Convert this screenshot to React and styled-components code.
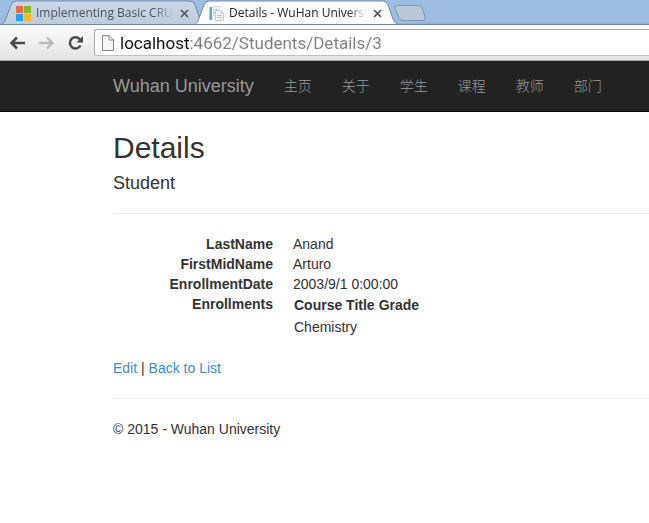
import React from "react";
import styled, { createGlobalStyle } from "styled-components";

const GlobalStyle = createGlobalStyle`
  *, *::before, *::after { box-sizing: border-box; }
  body {
    margin: 0;
    background: #fff;
    color: #333;
    font: 14px/20px "Liberation Sans", Arial, "Noto Sans CJK SC", sans-serif;
  }
  a { color: #428bca; text-decoration: none; }
  button { padding: 0; border: 0; background: none; }
`;

/* Browser frame */
const TabStrip = styled.div`
  display: flex;
  height: 25px;
  overflow: hidden;
  background: linear-gradient(#9dbde3 0 22px, #90b0d6);
  border-bottom: 1px solid #6e87a5;
`;

const Tab = styled.div`
  position: relative;
  flex: none;
  display: flex;
  align-items: center;
  width: 206px;
  height: 25px;
  padding: 1px 17px 0 15px;
  margin-left: ${(p) => (p.$active ? "-13px" : "0")};
  z-index: ${(p) => (p.$active ? 1 : 0)};
  color: ${(p) => (p.$active ? "#222" : "#4b5159")};
`;

const TabShape = styled.svg`
  position: absolute;
  inset: 0;
  z-index: -1;
  width: 100%;
  height: 100%;
`;

const TabIcon = styled.svg`
  flex: none;
  width: 17px;
  height: 17px;
  margin-right: 4px;
`;

const TabTitle = styled.span`
  flex: 1;
  min-width: 0;
  overflow: hidden;
  white-space: nowrap;
  font: 12px/20px "Open Sans", "Noto Sans", sans-serif;
  mask-image: linear-gradient(to right, #000 calc(100% - 20px), transparent);
`;

const CloseButton = styled.button`
  flex: none;
  display: flex;
  margin-left: 6px;
  color: #555;
`;

const NewTabButton = styled.button`
  display: flex;
  padding-top: 4px;
  margin-left: -6px;
`;

const Toolbar = styled.div`
  display: flex;
  align-items: center;
  height: 36px;
  padding-left: 7px;
  background: linear-gradient(#fbfbfb, #e4e4e4);
  border-bottom: 1px solid #a5a5a5;
`;

const ToolButton = styled.button`
  display: flex;
  justify-content: center;
  width: 20px;
  margin-right: 9px;
  color: ${(p) => (p.disabled ? "#bbb" : "#4a4a4a")};
`;

const AddressBar = styled.label`
  flex: 1;
  display: flex;
  align-items: center;
  height: 27px;
  padding-left: 7px;
  background: #fff;
  border: 1px solid #a8a8a8;
  border-bottom-color: #c2c2c2;
  border-right: 0;
  border-radius: 3px 0 0 3px;
`;

const AddressInput = styled.input`
  flex: 1;
  min-width: 0;
  height: 24px;
  padding: 0;
  margin-left: 6px;
  border: 0;
  outline: 0;
  font: 17px/24px Roboto, "Noto Sans", sans-serif;
  color: transparent;
  caret-color: #111;
  background: linear-gradient(to right, #111 70px, #808080 70px);
  background-clip: text;
`;

/* Site */
const NavBar = styled.nav`
  display: flex;
  height: 51px;
  padding-left: 98px;
  background: #222;
  border-bottom: 1px solid #080808;
`;

const NavLink = styled.a`
  flex: none;
  padding: 15px;
  color: #999;
  font-size: ${(p) => (p.$brand ? "18px" : "14px")};
  font-weight: ${(p) => (p.$brand ? 400 : 300)};
  white-space: nowrap;
`;

const Page = styled.div`
  padding: 19px 0 0 113px;
`;

const Title = styled.h2`
  margin: 0 0 10px;
  font-size: 30px;
  line-height: 33px;
  font-weight: 400;
`;

const Subtitle = styled.h4`
  margin: 0;
  font-size: 18px;
  line-height: 19px;
  font-weight: 400;
`;

const Rule = styled.hr`
  margin: 20px 0;
  border: 0;
  border-top: 1px solid #eee;
`;

const Fields = styled.dl`
  display: grid;
  grid-template-columns: 160px 1fr;
  column-gap: 20px;
  margin: 0 0 20px;
`;

const Term = styled.dt`
  font-weight: 700;
  text-align: right;
`;

const Value = styled.dd`
  margin: 0;
`;

const Enrollments = styled.table`
  border-collapse: collapse;
  th, td { padding: 1px; text-align: left; }
  th + th { padding-left: 3px; }
`;

const Text = styled.p`
  margin: 0;
`;

function Shape({ active }) {
  return (
    <TabShape viewBox="0 0 206 25" preserveAspectRatio="none" aria-hidden="true">
      <defs>
        <linearGradient id={active ? "tabOn" : "tabOff"} x1="0" y1="0" x2="0" y2="1">
          <stop offset="0" stopColor={active ? "#fff" : "#ccd8e7"} />
          <stop offset="1" stopColor={active ? "#fbfbfb" : "#bdcbdc"} />
        </linearGradient>
      </defs>
      <path
        d="M0 25C4 24 5 21 6 18L11 5Q12 1 16 1H190Q194 1 195 5L200 19Q202 24 206 25"
        fill={active ? "url(#tabOn)" : "url(#tabOff)"}
        stroke="#7288a2"
      />
      {!active && <path d="M0 24.5H206" stroke="#6e87a5" />}
    </TabShape>
  );
}

function Close() {
  return (
    <CloseButton type="button" aria-label="Close tab">
      <svg width="9" height="9" viewBox="0 0 9 9">
        <path d="M1 1L8 8M8 1L1 8" stroke="currentColor" strokeWidth="1.7" />
      </svg>
    </CloseButton>
  );
}

const navItems = ["主页", "关于", "学生", "课程", "教师", "部门"];
const fields = [
  ["LastName", "Anand"],
  ["FirstMidName", "Arturo"],
  ["EnrollmentDate", "2003/9/1 0:00:00"],
];

export default function App() {
  return (
    <>
      <GlobalStyle />
      <TabStrip>
        <Tab>
          <Shape />
          <TabIcon viewBox="0 0 17 17" aria-hidden="true">
            <path fill="#ee6a43" d="M1 1H8V8H1Z" />
            <path fill="#86b62d" d="M9 1H16V8H9Z" />
            <path fill="#20a5e8" d="M1 9H8V16H1Z" />
            <path fill="#f5b921" d="M9 9H16V16H9Z" />
          </TabIcon>
          <TabTitle>Implementing Basic CRUD</TabTitle>
          <Close />
        </Tab>
        <Tab $active>
          <Shape active />
          <TabIcon viewBox="0 0 17 17" aria-hidden="true">
            <path fill="#5ca5d2" d="M1 2H4V15H1Z" />
            <path fill="#a9d5ec" d="M1 2H2V15H1Z" />
            <path fill="#f2f3f5" stroke="#d5d8dd" d="M5.5 1.5H11.500V10.500H5.500Z" />
            <path fill="#f2f3f5" stroke="#c9ccd2" d="M7.500 5.500H12.500L15.500 8.500V15.500H7.500Z" />
            <path stroke="#b9c0ca" d="M7 4.500H10M6 7.500H8M9 10.500H14M9 12.500H14" />
            <path fill="#d4d8df" d="M12 5V9H16Z" />
          </TabIcon>
          <TabTitle>Details - WuHan University</TabTitle>
          <Close />
        </Tab>
        <NewTabButton type="button" aria-label="New tab">
          <svg width="34" height="18" viewBox="0 0 34 18">
            <path
              d="M4 1.5H26Q28 1.5 29 4L32 13Q33 16.500 30 16.500H10Q7 16.500 6 14L2 4Q1 1.500 4 1.500Z"
              fill="#bac9da"
              stroke="#7f95af"
            />
          </svg>
        </NewTabButton>
      </TabStrip>
      <Toolbar>
        <ToolButton type="button" aria-label="Back">
          <svg width="17" height="14" viewBox="0 0 17 14" fill="none" stroke="currentColor">
            <path d="M2 7H16M8 1.500L2.500 7L8 12.500" strokeWidth="2.500" />
          </svg>
        </ToolButton>
        <ToolButton type="button" aria-label="Forward" disabled>
          <svg width="17" height="14" viewBox="0 0 17 14" fill="none" stroke="currentColor">
            <path d="M1 7H15M9 1.500L14.500 7L9 12.500" strokeWidth="2.300" />
          </svg>
        </ToolButton>
        <ToolButton type="button" aria-label="Reload">
          <svg width="17" height="16" viewBox="0 0 17 16" fill="none">
            <path d="M13 4.500A5.600 5.600 0 1 0 13.500 10.500" stroke="currentColor" strokeWidth="2.500" />
            <path d="M16 1V7.500H9.500Z" fill="currentColor" />
          </svg>
        </ToolButton>
        <AddressBar>
          <svg width="12" height="16" viewBox="0 0 12 16" aria-hidden="true">
            <path d="M.5 .5H7L11.500 5V15.500H.5ZM7 .5V5H11.500" fill="#f7f7f7" stroke="#858585" />
          </svg>
          <AddressInput
            aria-label="Address"
            defaultValue="localhost:4662/Students/Details/3"
            spellCheck={false}
          />
        </AddressBar>
      </Toolbar>
      <NavBar>
        <NavLink href="#home" $brand>Wuhan University</NavLink>
        {navItems.map((item) => (
          <NavLink key={item} href={`#${item}`}>{item}</NavLink>
        ))}
      </NavBar>
      <Page>
        <main>
          <Title>Details</Title>
          <Subtitle>Student</Subtitle>
          <Rule />
          <Fields>
            {fields.map(([name, value]) => (
              <React.Fragment key={name}>
                <Term>{name}</Term>
                <Value>{value}</Value>
              </React.Fragment>
            ))}
            <Term>Enrollments</Term>
            <Value>
              <Enrollments>
                <thead>
                  <tr>
                    <th scope="col">Course Title</th>
                    <th scope="col">Grade</th>
                  </tr>
                </thead>
                <tbody>
                  <tr>
                    <td>Chemistry</td>
                    <td />
                  </tr>
                </tbody>
              </Enrollments>
            </Value>
          </Fields>
          <Text>
            <a href="#edit">Edit</a> | <a href="#list">Back to List</a>
          </Text>
        </main>
        <Rule />
        <footer>
          <Text>© 2015 - Wuhan University</Text>
        </footer>
      </Page>
    </>
  );
}
